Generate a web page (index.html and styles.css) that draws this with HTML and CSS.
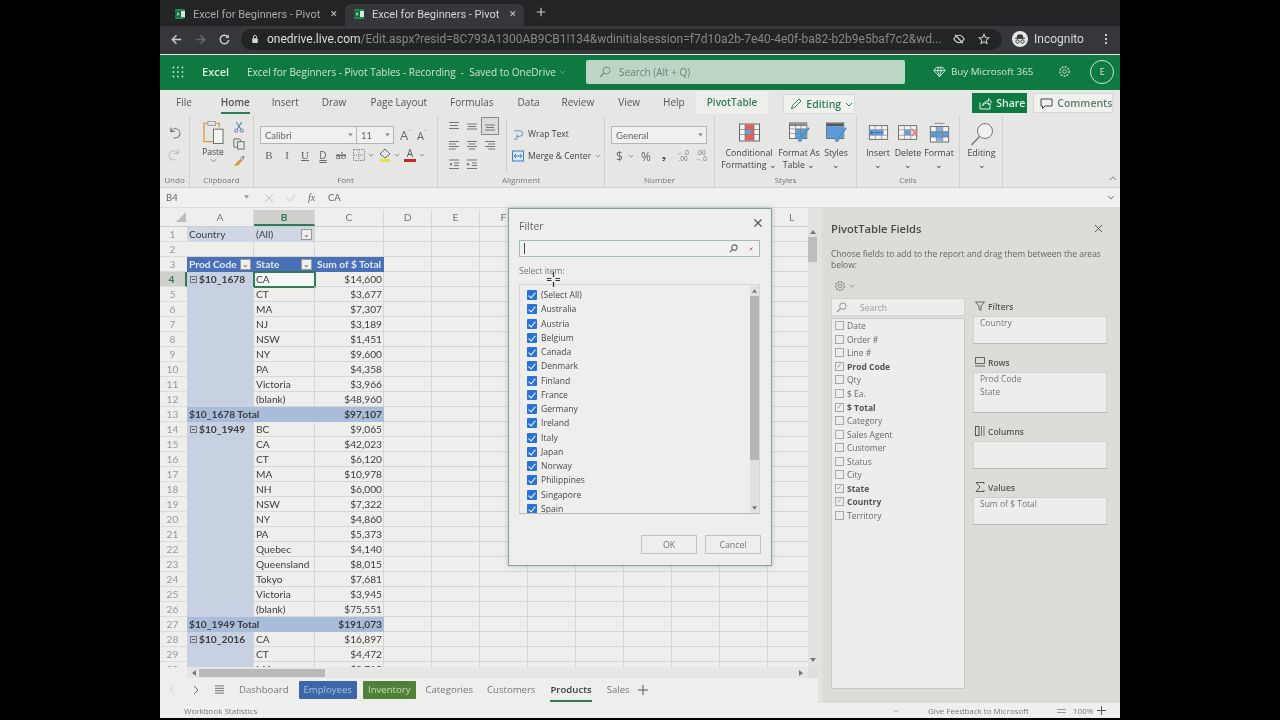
FILE: index.html
```html
<!doctype html>
<html lang="en">
  <head>
    <meta charset="UTF-8" />
    <title>Excel for Beginners - Pivot Tables - Recording</title>
    <link rel="stylesheet" href="styles.css">
  </head>
  <body>
    <div class="screen">
      <!-- Browser tabs -->
      <div class="tabstrip">
        <div class="tab">
          <svg class="favicon" viewBox="0 0 12 12"><rect x="1" y="1" width="10" height="10" rx="1" fill="#1d8a52"/><rect x="6" y="3" width="5" height="6" fill="#d5eadc"/><rect x="1" y="3" width="6" height="6" fill="#0d6b3a"/><path d="M3 4.500l2 3M5 4.500l-2 3" stroke="#fff" stroke-width=".7"/></svg>
          <span class="tab-title">Excel for Beginners - Pivot</span>
          <span class="tab-close">✕</span>
        </div>
        <div class="tab active">
          <svg class="favicon" viewBox="0 0 12 12"><rect x="1" y="1" width="10" height="10" rx="1" fill="#1d8a52"/><rect x="6" y="3" width="5" height="6" fill="#d5eadc"/><rect x="1" y="3" width="6" height="6" fill="#0d6b3a"/><path d="M3 4.500l2 3M5 4.500l-2 3" stroke="#fff" stroke-width=".7"/></svg>
          <span class="tab-title">Excel for Beginners - Pivot</span>
          <span class="tab-close">✕</span>
        </div>
        <svg class="new-tab" viewBox="0 0 12 12"><path d="M6 1v10M1 6h10" stroke="#c8c9cb" stroke-width="1.400"/></svg>
      </div>

      <!-- Address bar -->
      <div class="urlbar">
        <svg class="nav-icon" viewBox="0 0 14 14"><path d="M12 7H3M7 2.500 2.500 7 7 11.500" fill="none" stroke="#c9cacc" stroke-width="1.600"/></svg>
        <svg class="nav-icon" viewBox="0 0 14 14"><path d="M2 7h9M7 2.500 11.500 7 7 11.500" fill="none" stroke="#66686b" stroke-width="1.600"/></svg>
        <svg class="nav-icon" viewBox="0 0 14 14"><path d="M11.500 7.500A4.600 4.600 0 1 1 10 3.600" fill="none" stroke="#c9cacc" stroke-width="1.600"/><path d="M11.800 1.500v4h-4z" fill="#c9cacc"/></svg>
        <div class="omnibox">
          <svg class="lock" viewBox="0 0 10 12"><rect x="1.500" y="5" width="7" height="6" rx="1" fill="#d5d6d8"/><path d="M3 5V3.500a2 2 0 0 1 4 0V5" fill="none" stroke="#d5d6d8" stroke-width="1.200"/></svg>
          <span class="url"><b>onedrive.live.com</b>/Edit.aspx?resid=8C793A1300AB9CB1!134&amp;wdinitialsession=f7d10a2b-7e40-4e0f-ba82-b2b9e5baf7c2&amp;wd...</span>
          <svg class="omni-icon eye" viewBox="0 0 14 14"><path d="M1 7c2-3.400 4-4.400 6-4.400S11 3.600 13 7c-2 3.400-4 4.400-6 4.400S3 10.400 1 7z" fill="none" stroke="#c9cacc" stroke-width="1.400"/><path d="M2.500 2 11.500 12" stroke="#c9cacc" stroke-width="1.500"/></svg>
          <svg class="omni-icon" viewBox="0 0 14 14"><path d="M7 1.500 8.600 5.200l4 .4-3 2.700.9 3.900L7 10.200 3.500 12.200l.9-3.900-3-2.700 4-.4z" fill="none" stroke="#c9cacc" stroke-width="1.200"/></svg>
        </div>
        <div class="incognito">
          <svg class="spy" viewBox="0 0 16 16"><circle cx="8" cy="8" r="8" fill="#e6e6e6"/><path d="M3 7.300h10M5 7l.9-3h4.200l.9 3z" fill="#3a3b3e" stroke="#3a3b3e"/><circle cx="5.500" cy="10.500" r="1.700" fill="none" stroke="#3a3b3e"/><circle cx="10.500" cy="10.500" r="1.700" fill="none" stroke="#3a3b3e"/></svg>
          <span>Incognito</span>
        </div>
        <div class="kebab"><i></i><i></i><i></i></div>
      </div>

      <!-- Excel title bar -->
      <div class="appbar">
        <svg class="waffle" viewBox="0 0 12 12" fill="#cfe3d6"><circle cx="1.500" cy="1.500" r=".9"/><circle cx="6" cy="1.500" r=".9"/><circle cx="10.500" cy="1.500" r=".9"/><circle cx="1.500" cy="6" r=".9"/><circle cx="6" cy="6" r=".9"/><circle cx="10.500" cy="6" r=".9"/><circle cx="1.500" cy="10.500" r=".9"/><circle cx="6" cy="10.500" r=".9"/><circle cx="10.500" cy="10.500" r=".9"/></svg>
        <span class="app-name">Excel</span>
        <span class="doc-title">Excel for Beginners - Pivot Tables - Recording &nbsp;-&nbsp; Saved to OneDrive<svg viewBox="0 0 8 5"><path d="M1 1l3 3 3-3" fill="none" stroke="#7fb296"/></svg></span>
        <div class="search">
          <svg class="search-icon" viewBox="0 0 12 12"><circle cx="7.500" cy="4.500" r="3.500" fill="none" stroke="#6f8f7c"/><path d="M5 7 1 11" stroke="#6f8f7c" stroke-width="1.200"/></svg>
          <span>Search (Alt + Q)</span>
        </div>
        <div class="buy">
          <svg class="diamond" viewBox="0 0 14 12"><path d="M3.500 1h7L13 4.500 7 11 1 4.500zM1 4.500h12M5 4.500 7 11l2-6.500M5 4.500 6 1M9 4.500 8 1" fill="none" stroke="#d5e6db"/></svg>
          <span>Buy Microsoft 365</span>
        </div>
        <svg class="gear" viewBox="0 0 14 14"><circle cx="7" cy="7" r="2" fill="none" stroke="#bcd6c6"/><circle cx="7" cy="7" r="5" fill="none" stroke="#bcd6c6" stroke-width="1.600" stroke-dasharray="2 1.300"/></svg>
        <span class="avatar">E</span>
      </div>

      <!-- Ribbon tabs -->
      <div class="ribbon-tabs">
        <span class="rtab file">File</span>
        <span class="rtab home">Home</span>
        <span class="rtab insert">Insert</span>
        <span class="rtab draw">Draw</span>
        <span class="rtab layout">Page Layout</span>
        <span class="rtab formulas">Formulas</span>
        <span class="rtab data">Data</span>
        <span class="rtab review">Review</span>
        <span class="rtab view">View</span>
        <span class="rtab help">Help</span>
        <span class="rtab pivot">PivotTable</span>
        <span class="editing-btn">
          <svg viewBox="0 0 12 12"><path d="M1.500 10.500 2.500 7.500 9 1l2 2-6.500 6.500z" fill="none" stroke="#2f7d57"/></svg>
          Editing
          <svg class="chev-green" viewBox="0 0 8 5"><path d="M1 1l3 3 3-3" fill="none" stroke="#2f7d57"/></svg>
        </span>
        <span class="share-btn">
          <svg viewBox="0 0 13 13"><path d="M1 5.500V12h10V7M3.500 9c.5-3 2.500-5 6-5V1.500L12.500 5l-3 3V6C6.500 6 4.500 7 3.500 9z" fill="none" stroke="#e2efe7"/></svg>
          Share
        </span>
        <span class="comments-btn">
          <svg viewBox="0 0 13 13"><path d="M1 2h11v7H5l-2.500 2.500V9H1z" fill="none" stroke="#444"/></svg>
          Comments
        </span>
      </div>

      <!-- Ribbon -->
      <div class="ribbon">
        <div class="group g-undo">
          <div class="group-body undo-body">
            <svg viewBox="0 0 14 14"><path d="M3 1.500V6h4.500M3.500 5.500A5 5 0 1 1 6 12.500" fill="none" stroke="#6a6a6a" stroke-width="1.100"/></svg>
            <svg viewBox="0 0 14 14"><path d="M11 1.500V6H6.500M10.500 5.500A5 5 0 1 0 8 12.500" fill="none" stroke="#b9b9b9" stroke-width="1.100"/></svg>
          </div>
          <span class="group-label">Undo</span>
        </div>

        <div class="group g-clip">
          <div class="group-body clip-body">
            <div class="paste">
              <svg viewBox="0 0 22 25"><path d="M4 3H1v19h10" fill="none" stroke="#d79a3e" stroke-width="1.300"/><path d="M14 3h3v4" fill="none" stroke="#d79a3e" stroke-width="1.300"/><rect x="5" y="1" width="8" height="4" fill="none" stroke="#9a9a9a"/><rect x="11" y="9" width="10" height="15" fill="#f4f4f4" stroke="#6a6a6a"/></svg>
              <span>Paste</span>
              <svg class="chev" viewBox="0 0 8 5"><path d="M1 1l3 3 3-3" fill="none" stroke="#777"/></svg>
            </div>
            <div class="clip-tools">
              <svg viewBox="0 0 12 13"><path d="M3 1l5 8M9 1 4 9" stroke="#4f7fb5" stroke-width="1.100"/><circle cx="3" cy="10.500" r="1.700" fill="none" stroke="#4f7fb5"/><circle cx="9" cy="10.500" r="1.700" fill="none" stroke="#4f7fb5"/></svg>
              <svg viewBox="0 0 13 13"><path d="M4 10H1V1h6l1 1v2" fill="none" stroke="#666"/><rect x="5" y="4" width="7" height="8" fill="none" stroke="#666"/></svg>
              <svg viewBox="0 0 13 13"><path d="M8 4 3 9l-2 3 5-1 4-5z" fill="#d79a3e"/><path d="M8 4l3-3 1 1-2 4" fill="none" stroke="#666"/></svg>
            </div>
          </div>
          <span class="group-label">Clipboard</span>
        </div>

        <div class="group g-font">
          <div class="group-body font-body">
            <div class="font-row">
              <span class="select font-name">Calibri<svg class="caret" viewBox="0 0 6 4"><path d="M0 0h6L3 4z"/></svg></span>
              <span class="select font-size">11<svg class="caret" viewBox="0 0 6 4"><path d="M0 0h6L3 4z"/></svg></span>
              <span class="grow">A<sup>ˆ</sup></span>
              <span class="grow small">A<sup>ˇ</sup></span>
            </div>
            <div class="font-row tools">
              <b class="ft">B</b>
              <i class="ft">I</i>
              <u class="ft">U</u>
              <span class="ft dbl">D</span>
              <s class="ft">ab</s>
              <svg class="ft-ico" viewBox="0 0 12 12"><rect x=".5" y=".5" width="11" height="11" fill="none" stroke="#888" stroke-dasharray="1.500 1"/><path d="M6 1v10M1 6h10" stroke="#888" stroke-dasharray="1 1"/></svg>
              <svg class="chev tiny" viewBox="0 0 8 5"><path d="M1 1l3 3 3-3" fill="none" stroke="#777"/></svg>
              <svg class="ft-ico fill" viewBox="0 0 12 14"><path d="M6 1 11 6 6 10 1 6z" fill="none" stroke="#666"/><rect x="1" y="11" width="10" height="3" fill="#e7e24c"/></svg>
              <svg class="chev tiny" viewBox="0 0 8 5"><path d="M1 1l3 3 3-3" fill="none" stroke="#777"/></svg>
              <span class="ft-color"><span>A</span></span>
              <svg class="chev tiny" viewBox="0 0 8 5"><path d="M1 1l3 3 3-3" fill="none" stroke="#777"/></svg>
            </div>
          </div>
          <span class="group-label">Font</span>
        </div>

        <div class="group g-align">
          <div class="group-body align-body">
            <div class="align-grid">
              <svg viewBox="0 0 12 10"><path d="M1 1.500h10M2 4.500h8M1 7.500h10" stroke="#777"/></svg>
              <svg viewBox="0 0 12 10"><path d="M1 3h10M2 5.500h8M1 8h10" stroke="#777"/></svg>
              <svg class="on" viewBox="0 0 12 10"><path d="M1 4h10M2 6.500h8M1 9h10" stroke="#777"/></svg>
              <svg viewBox="0 0 12 10"><path d="M1 1.500h10M1 4h7M1 6.500h10M1 9h7" stroke="#777"/></svg>
              <svg viewBox="0 0 12 10"><path d="M1 1.500h10M2.500 4h7M1 6.500h10M2.500 9h7" stroke="#777"/></svg>
              <svg viewBox="0 0 12 10"><path d="M1 1.500h10M4 4h7M1 6.500h10M4 9h7" stroke="#777"/></svg>
              <svg viewBox="0 0 12 10"><path d="M1 1h10M6 4h5M6 6.500h5M1 9.500h10" stroke="#777"/><path d="M4 3.500 1 5.200 4 7z" fill="#4f8fd0"/></svg>
              <svg viewBox="0 0 12 10"><path d="M1 1h10M6 4h5M6 6.500h5M1 9.500h10" stroke="#777"/><path d="M1 3.500 4 5.200 1 7z" fill="#4f8fd0"/></svg>
            </div>
            <div class="align-text">
              <span class="cmd"><svg viewBox="0 0 12 13"><path d="M2 3h6a2.500 2.500 0 0 1 0 6H5" fill="none" stroke="#4f8fd0"/><path d="M6 7 4 9l2 2" fill="none" stroke="#4f8fd0"/><path d="M2 12h3" stroke="#666"/></svg>Wrap Text</span>
              <span class="cmd"><svg viewBox="0 0 12 11"><rect x=".5" y=".5" width="11" height="10" fill="#dbe8f5" stroke="#3f7fc0"/><path d="M2 5.500h8M4 3.500 2 5.500l2 2M8 3.500l2 2-2 2" fill="none" stroke="#3f7fc0"/></svg>Merge &amp; Center<svg class="chev tiny" viewBox="0 0 8 5"><path d="M1 1l3 3 3-3" fill="none" stroke="#777"/></svg></span>
            </div>
          </div>
          <span class="group-label">Alignment</span>
        </div>

        <div class="group g-num">
          <div class="group-body num-body">
            <span class="select num-format">General<svg class="caret" viewBox="0 0 6 4"><path d="M0 0h6L3 4z"/></svg></span>
            <div class="num-tools">
              <span class="dollar">$</span>
              <svg class="chev tiny" viewBox="0 0 8 5"><path d="M1 1l3 3 3-3" fill="none" stroke="#777"/></svg>
              <span class="pct">%</span>
              <span class="comma">❟</span>
              <span class="dec"><em>←</em>.0<br>.00</span>
              <span class="dec">.00<br><em>→</em>.0</span>
            </div>
          </div>
          <span class="group-label">Number</span>
        </div>

        <div class="group g-styles">
          <div class="group-body cmds">
            <div class="big cond">
              <svg viewBox="0 0 21 18"><rect x=".5" y=".5" width="20" height="17" fill="#f4f4f4" stroke="#666"/><rect x="6" y="1" width="9" height="5" fill="#e0615e"/><rect x="6" y="6" width="6" height="5" fill="#6d9bd1"/><rect x="12" y="6" width="3" height="5" fill="#e0615e"/><rect x="6" y="11" width="9" height="6" fill="#e0615e"/><path d="M6 1v16M15 1v16M1 6h19M1 11h19" stroke="#777" stroke-width=".7"/></svg>
              <span>Conditional<br>Formatting ⌄</span>
            </div>
            <div class="big table">
              <svg viewBox="0 0 23 22"><rect x=".5" y=".5" width="19" height="17" fill="#f4f4f4" stroke="#666"/><rect x="1" y="1" width="18" height="3" fill="#8a8a8a"/><rect x="7" y="7" width="12" height="10" fill="#5c9bd8"/><path d="M7 1v16M13 1v16M1 7h18M1 12h18" stroke="#777" stroke-width=".7"/><path d="M22 6 13 17" stroke="#4f8fd0" stroke-width="2"/><circle cx="12" cy="19" r="2.500" fill="#5c9bd8"/></svg>
              <span>Format As<br>Table ⌄</span>
            </div>
            <div class="big style">
              <svg viewBox="0 0 23 22"><rect x=".5" y=".5" width="19" height="17" fill="#f4f4f4" stroke="#666"/><rect x="1" y="1" width="18" height="3" fill="#555"/><rect x="1" y="4" width="18" height="13" fill="#5c9bd8"/><path d="M22 6 13 17" stroke="#4f8fd0" stroke-width="2"/><circle cx="12" cy="19" r="2.500" fill="#5c9bd8"/></svg>
              <span>Styles<br>⌄</span>
            </div>
          </div>
          <span class="group-label">Styles</span>
        </div>

        <div class="group g-cells">
          <div class="group-body cmds">
            <div class="big ins">
              <svg viewBox="0 0 23 18"><rect x="1.500" y="1.500" width="20" height="15" fill="#f4f4f4" stroke="#666"/><path d="M8 1v16M15 1v16M1 6h21M1 12h21" stroke="#777" stroke-width=".7"/><rect x="1" y="6" width="16" height="6" fill="#6d9bd1"/><path d="M16 9H2M5 6.500 2 9l3 2.500" fill="none" stroke="#2f6fb5"/></svg>
              <span>Insert<br>⌄</span>
            </div>
            <div class="big del">
              <svg viewBox="0 0 23 18"><rect x=".5" y="1.500" width="20" height="15" fill="#f4f4f4" stroke="#666"/><path d="M7 1v16M14 1v16M1 6h19M1 12h19" stroke="#777" stroke-width=".7"/><rect x="7" y="6" width="7" height="6" fill="#6d9bd1"/><path d="M15 5l6 8M21 5l-6 8" stroke="#e0716e" stroke-width="1.400"/></svg>
              <span>Delete<br>⌄</span>
            </div>
            <div class="big fmt">
              <svg viewBox="0 0 23 22"><path d="M6 1h11" stroke="#888"/><rect x="1.500" y="4.500" width="20" height="17" fill="#f4f4f4" stroke="#666"/><rect x="8" y="5" width="7" height="16" fill="#7fb0de"/><rect x="2" y="10" width="19" height="6" fill="#5c9bd8"/><path d="M8 4v17M15 4v17M1 10h21M1 16h21" stroke="#777" stroke-width=".7"/></svg>
              <span>Format<br>⌄</span>
            </div>
          </div>
          <span class="group-label">Cells</span>
        </div>

        <div class="group g-edit">
          <div class="group-body cmds">
            <div class="big find">
              <svg viewBox="0 0 24 26"><circle cx="15" cy="9" r="7.500" fill="#f1f1f1" stroke="#777"/><path d="M9.500 14.500 1.500 23" stroke="#777" stroke-width="1.400"/></svg>
              <span>Editing<br>⌄</span>
            </div>
          </div>
        </div>

        <svg class="collapse" viewBox="0 0 10 6"><path d="M1 5l4-4 4 4" fill="none" stroke="#777" stroke-width="1.200"/></svg>
      </div>

      <!-- Formula bar -->
      <div class="formula-bar">
        <span class="name-box">B4<svg class="caret" viewBox="0 0 6 4"><path d="M0 0h6L3 4z"/></svg></span>
        <div class="fx-tools">
          <svg viewBox="0 0 10 10"><path d="M1 1l8 8M9 1 1 9" stroke="#c4c4c4"/></svg>
          <svg viewBox="0 0 12 10"><path d="M1 5l3.500 4L11 1" fill="none" stroke="#c4c4c4"/></svg>
          <i>fx</i>
        </div>
        <span class="formula">CA</span>
        <svg class="formula-chev" viewBox="0 0 8 5"><path d="M1 1l3 3 3-3" fill="none" stroke="#777"/></svg>
      </div>

      <div class="workspace">
        <div class="sheet-col">
          <div class="grid-wrap">
            <div class="sheet">
              <div class="col-heads">
                <span class="corner"><svg viewBox="0 0 10 10"><path d="M10 0v10H0z" fill="#bdbdbd"/></svg></span>
                <span class="ch a">A</span>
                <span class="ch b on">B</span>
                <span class="ch c">C</span>
                <span class="ch w">D</span><span class="ch w">E</span><span class="ch w">F</span><span class="ch w">G</span><span class="ch w">H</span><span class="ch w">I</span><span class="ch w">J</span><span class="ch w">K</span><span class="ch w">L</span>
              </div>
              <div class="row"><span class="rh">1</span><span class="cell-a page">Country</span><span class="cell-b page">(All)<em class="drop">⌄</em></span><span class="cell-c"></span><span class="rest"></span></div>
              <div class="row"><span class="rh">2</span><span class="cell-a"></span><span class="cell-b"></span><span class="cell-c"></span><span class="rest"></span></div>
              <div class="row head"><span class="rh">3</span><span class="cell-a">Prod Code<em class="drop">⌄</em></span><span class="cell-b">State<em class="drop">⌄</em></span><span class="cell-c">Sum of $ Total</span><span class="rest"></span></div>
              <div class="row"><span class="rh on">4</span><span class="cell-a key"><em class="minus"></em>$10_1678</span><span class="cell-b sel">CA</span><span class="cell-c">$14,600</span><span class="rest"></span></div>
              <div class="row"><span class="rh">5</span><span class="cell-a key"></span><span class="cell-b">CT</span><span class="cell-c">$3,677</span><span class="rest"></span></div>
              <div class="row"><span class="rh">6</span><span class="cell-a key"></span><span class="cell-b">MA</span><span class="cell-c">$7,307</span><span class="rest"></span></div>
              <div class="row"><span class="rh">7</span><span class="cell-a key"></span><span class="cell-b">NJ</span><span class="cell-c">$3,189</span><span class="rest"></span></div>
              <div class="row"><span class="rh">8</span><span class="cell-a key"></span><span class="cell-b">NSW</span><span class="cell-c">$1,451</span><span class="rest"></span></div>
              <div class="row"><span class="rh">9</span><span class="cell-a key"></span><span class="cell-b">NY</span><span class="cell-c">$9,600</span><span class="rest"></span></div>
              <div class="row"><span class="rh">10</span><span class="cell-a key"></span><span class="cell-b">PA</span><span class="cell-c">$4,358</span><span class="rest"></span></div>
              <div class="row"><span class="rh">11</span><span class="cell-a key"></span><span class="cell-b">Victoria</span><span class="cell-c">$3,966</span><span class="rest"></span></div>
              <div class="row"><span class="rh">12</span><span class="cell-a key"></span><span class="cell-b">(blank)</span><span class="cell-c">$48,960</span><span class="rest"></span></div>
              <div class="row total"><span class="rh">13</span><span class="cell-a">$10_1678 Total</span><span class="cell-b"></span><span class="cell-c">$97,107</span><span class="rest"></span></div>
              <div class="row"><span class="rh">14</span><span class="cell-a key"><em class="minus"></em>$10_1949</span><span class="cell-b">BC</span><span class="cell-c">$9,065</span><span class="rest"></span></div>
              <div class="row"><span class="rh">15</span><span class="cell-a key"></span><span class="cell-b">CA</span><span class="cell-c">$42,023</span><span class="rest"></span></div>
              <div class="row"><span class="rh">16</span><span class="cell-a key"></span><span class="cell-b">CT</span><span class="cell-c">$6,120</span><span class="rest"></span></div>
              <div class="row"><span class="rh">17</span><span class="cell-a key"></span><span class="cell-b">MA</span><span class="cell-c">$10,978</span><span class="rest"></span></div>
              <div class="row"><span class="rh">18</span><span class="cell-a key"></span><span class="cell-b">NH</span><span class="cell-c">$6,000</span><span class="rest"></span></div>
              <div class="row"><span class="rh">19</span><span class="cell-a key"></span><span class="cell-b">NSW</span><span class="cell-c">$7,322</span><span class="rest"></span></div>
              <div class="row"><span class="rh">20</span><span class="cell-a key"></span><span class="cell-b">NY</span><span class="cell-c">$4,860</span><span class="rest"></span></div>
              <div class="row"><span class="rh">21</span><span class="cell-a key"></span><span class="cell-b">PA</span><span class="cell-c">$5,373</span><span class="rest"></span></div>
              <div class="row"><span class="rh">22</span><span class="cell-a key"></span><span class="cell-b">Quebec</span><span class="cell-c">$4,140</span><span class="rest"></span></div>
              <div class="row"><span class="rh">23</span><span class="cell-a key"></span><span class="cell-b">Queensland</span><span class="cell-c">$8,015</span><span class="rest"></span></div>
              <div class="row"><span class="rh">24</span><span class="cell-a key"></span><span class="cell-b">Tokyo</span><span class="cell-c">$7,681</span><span class="rest"></span></div>
              <div class="row"><span class="rh">25</span><span class="cell-a key"></span><span class="cell-b">Victoria</span><span class="cell-c">$3,945</span><span class="rest"></span></div>
              <div class="row"><span class="rh">26</span><span class="cell-a key"></span><span class="cell-b">(blank)</span><span class="cell-c">$75,551</span><span class="rest"></span></div>
              <div class="row total"><span class="rh">27</span><span class="cell-a">$10_1949 Total</span><span class="cell-b"></span><span class="cell-c">$191,073</span><span class="rest"></span></div>
              <div class="row"><span class="rh">28</span><span class="cell-a key"><em class="minus"></em>$10_2016</span><span class="cell-b">CA</span><span class="cell-c">$16,897</span><span class="rest"></span></div>
              <div class="row"><span class="rh">29</span><span class="cell-a key"></span><span class="cell-b">CT</span><span class="cell-c">$4,472</span><span class="rest"></span></div>
              <div class="row"><span class="rh">30</span><span class="cell-a key"></span><span class="cell-b">MA</span><span class="cell-c">$3,710</span><span class="rest"></span></div>
            </div>
            <div class="vscroll">
              <svg class="arrow" viewBox="0 0 6 4"><path d="M3 0l3 4H0z"/></svg>
              <span class="vthumb"></span>
              <svg class="arrow down" viewBox="0 0 6 4"><path d="M0 0h6L3 4z"/></svg>
            </div>
          </div>
          <div class="hscroll">
            <svg class="arrow" viewBox="0 0 4 6"><path d="M4 0v6L0 3z"/></svg>
            <span class="hthumb"></span>
            <svg class="arrow right" viewBox="0 0 4 6"><path d="M0 0v6l4-3z"/></svg>
          </div>
          <div class="sheet-tabs">
            <svg class="sheet-nav" viewBox="0 0 6 10"><path d="M5 1 1 5l4 4" fill="none" stroke="#d0d0d0"/></svg>
            <svg class="sheet-nav" viewBox="0 0 6 10"><path d="M1 1l4 4-4 4" fill="none" stroke="#666"/></svg>
            <svg class="sheet-menu" viewBox="0 0 10 9"><path d="M0 .5h10M0 3.200h10M0 5.800h10M0 8.500h10" stroke="#666"/></svg>
            <span class="stab">Dashboard</span>
            <span class="stab blue">Employees</span>
            <span class="stab green">Inventory</span>
            <span class="stab">Categories</span>
            <span class="stab">Customers</span>
            <span class="stab current">Products</span>
            <span class="stab">Sales</span>
            <svg class="add-sheet" viewBox="0 0 10 10"><path d="M5 0v10M0 5h10" stroke="#555"/></svg>
          </div>
        </div>

        <!-- Field list pane -->
        <aside class="pane">
          <div class="pane-head">
            <h2>PivotTable Fields</h2>
            <svg viewBox="0 0 10 10"><path d="M1 1l8 8M9 1 1 9" stroke="#555" stroke-width="1.100"/></svg>
          </div>
          <p class="pane-help">Choose fields to add to the report and drag them between the areas below:</p>
          <div class="pane-gear">
            <svg viewBox="0 0 12 12"><circle cx="6" cy="6" r="1.800" fill="none" stroke="#8a8a8a"/><circle cx="6" cy="6" r="4.300" fill="none" stroke="#8a8a8a" stroke-width="1.500" stroke-dasharray="1.800 1.100"/></svg>
            <svg class="chev tiny" viewBox="0 0 8 5"><path d="M1 1l3 3 3-3" fill="none" stroke="#888"/></svg>
          </div>
          <div class="pane-cols">
            <div class="fields">
              <div class="field-search">
                <svg viewBox="0 0 12 12"><circle cx="7.500" cy="4.500" r="3.500" fill="none" stroke="#8a8a8a"/><path d="M5 7 1 11" stroke="#8a8a8a" stroke-width="1.200"/></svg>
                <span>Search</span>
              </div>
              <ul class="field-list">
                <li><span class="box"></span>Date</li>
                <li><span class="box"></span>Order #</li>
                <li><span class="box"></span>Line #</li>
                <li class="used"><span class="box">✓</span>Prod Code</li>
                <li><span class="box"></span>Qty</li>
                <li><span class="box"></span>$ Ea.</li>
                <li class="used"><span class="box">✓</span>$ Total</li>
                <li><span class="box"></span>Category</li>
                <li><span class="box"></span>Sales Agent</li>
                <li><span class="box"></span>Customer</li>
                <li><span class="box"></span>Status</li>
                <li><span class="box"></span>City</li>
                <li class="used"><span class="box">✓</span>State</li>
                <li class="used"><span class="box">✓</span>Country</li>
                <li><span class="box"></span>Territory</li>
              </ul>
            </div>
            <div class="areas">
              <div class="area">
                <h3><svg viewBox="0 0 10 10"><path d="M.5 1h9L6 5v4.500L4 8V5z" fill="none" stroke="#666"/></svg>Filters</h3>
                <div class="drop-box filters"><span>Country</span></div>
              </div>
              <div class="area">
                <h3><svg viewBox="0 0 10 10"><rect x=".5" y=".5" width="9" height="6" fill="none" stroke="#666"/><path d="M0 9h10" stroke="#666"/></svg>Rows</h3>
                <div class="drop-box rows"><span>Prod Code</span><span>State</span></div>
              </div>
              <div class="area">
                <h3><svg viewBox="0 0 10 10"><rect x=".5" y=".5" width="3.500" height="9" fill="none" stroke="#555"/><path d="M6.500 0v10M9 0v10" stroke="#777"/></svg>Columns</h3>
                <div class="drop-box cols"></div>
              </div>
              <div class="area">
                <h3><svg viewBox="0 0 10 10"><path d="M9 2V.500H1L5 5 1 9.500h8V8" fill="none" stroke="#555"/></svg>Values</h3>
                <div class="drop-box vals"><span>Sum of $ Total</span></div>
              </div>
            </div>
          </div>
        </aside>
      </div>

      <div class="statusbar">
        <span class="stats">Workbook Statistics</span>
        <svg class="chev tiny status-chev" viewBox="0 0 8 5"><path d="M1 1l3 3 3-3" fill="none" stroke="#888"/></svg>
        <span class="feedback">Give Feedback to Microsoft</span>
        <svg class="zoom-ctl" viewBox="0 0 9 4"><path d="M0 .5h9M0 3.500h9" stroke="#999"/></svg>
        <span class="zoom-val">100%</span>
        <svg class="zoom-plus" viewBox="0 0 9 9"><path d="M4.500 0v9M0 4.500h9" stroke="#555"/></svg>
      </div>

      <!-- Filter dialog -->
      <div class="dialog">
        <div class="dialog-head">
          <span>Filter</span>
          <svg viewBox="0 0 8 8"><path d="M.5.500l7 7M7.500.500l-7 7" stroke="#555" stroke-width="1.200"/></svg>
        </div>
        <div class="filter-input">
          <span class="text-caret"></span>
          <svg class="fi-search" viewBox="0 0 10 10"><circle cx="6" cy="4" r="3" fill="none" stroke="#666" stroke-width="1.200"/><path d="M4 6 1 9" stroke="#666" stroke-width="1.400"/></svg>
          <svg class="fi-clear" viewBox="0 0 4 4"><path d="M.5.500l3 3M3.500.500l-3 3" stroke="#c08a96"/></svg>
        </div>
        <div class="select-label">Select item:</div>
        <div class="items">
          <ul>
            <li><span class="check"></span>(Select All)</li>
            <li><span class="check"></span>Australia</li>
            <li><span class="check"></span>Austria</li>
            <li><span class="check"></span>Belgium</li>
            <li><span class="check"></span>Canada</li>
            <li><span class="check"></span>Denmark</li>
            <li><span class="check"></span>Finland</li>
            <li><span class="check"></span>France</li>
            <li><span class="check"></span>Germany</li>
            <li><span class="check"></span>Ireland</li>
            <li><span class="check"></span>Italy</li>
            <li><span class="check"></span>Japan</li>
            <li><span class="check"></span>Norway</li>
            <li><span class="check"></span>Philippines</li>
            <li><span class="check"></span>Singapore</li>
            <li><span class="check"></span>Spain</li>
          </ul>
          <div class="items-scroll">
            <svg class="arrow" viewBox="0 0 6 4"><path d="M3 0l3 4H0z"/></svg>
            <span class="items-thumb"></span>
            <svg class="arrow down" viewBox="0 0 6 4"><path d="M0 0h6L3 4z"/></svg>
          </div>
        </div>
        <div class="dialog-actions">
          <button type="button">OK</button>
          <button type="button">Cancel</button>
        </div>
        <svg class="cursor" viewBox="0 0 15 15"><path d="M7.500 0v5M7.500 10v5M1 6.500h4.500M9.500 6.500H14M1 8.500h4.500M9.500 8.500H14" stroke="#333" stroke-width="1.200"/></svg>
      </div>
    </div>
  </body>
</html>
```

FILE: styles.css
```css
* {
  box-sizing: border-box;
}

html,
body {
  margin: 0;
  height: 100%;
  background: #000;
  overflow: hidden;
}

ul {
  margin: 0;
  padding: 0;
  list-style: none;
}

em {
  font-style: normal;
}

svg {
  display: block;
  flex: none;
}

.screen {
  position: relative;
  display: flex;
  flex-direction: column;
  width: 960px;
  height: 718px;
  margin-left: 160px;
  overflow: hidden;
  background: #e6e6e4;
  color: #444;
  font: 9.5px "Open Sans", sans-serif;
  filter: blur(.35px);
}

/* Browser chrome */
.tabstrip {
  display: flex;
  align-items: flex-end;
  flex: none;
  height: 26px;
  padding-left: 6px;
  background: #232426;
}

.tab {
  display: flex;
  align-items: center;
  flex: none;
  width: 179px;
  height: 22px;
  padding: 0 7px 2px 8px;
  color: #a9aaac;
  font: 11px Roboto, sans-serif;
}

.tab.active {
  border-radius: 6px 6px 0 0;
  background: #36373a;
  color: #d3d4d6;
}

.favicon {
  width: 12px;
  height: 12px;
  margin-right: 7px;
}

.tab-title {
  flex: 1;
  overflow: hidden;
  white-space: nowrap;
}

.tab-close {
  font-size: 9px;
  color: #cfd0d2;
}

.new-tab {
  width: 10px;
  height: 10px;
  margin: 0 0 9px 12px;
}

.urlbar {
  display: flex;
  align-items: center;
  flex: none;
  height: 28px;
  padding: 0 0 2px 10px;
  background: #36373a;
}

.nav-icon {
  width: 13px;
  height: 13px;
  margin-right: 11px;
}

.omnibox {
  display: flex;
  align-items: center;
  flex: none;
  width: 761px;
  height: 21px;
  margin-left: -1px;
  padding-left: 10px;
  border-radius: 11px;
  background: #232426;
}

.lock {
  width: 8px;
  height: 10px;
  margin-right: 8px;
}

.url {
  flex: 1;
  min-width: 0;
  overflow: hidden;
  color: #87888b;
  font: 12px Roboto, sans-serif;
  white-space: nowrap;
}

.url b {
  color: #dcdddf;
  font-weight: 400;
}

.omni-icon {
  width: 12px;
  height: 12px;
  margin-right: 12px;
}

.omni-icon.eye {
  margin-right: 13px;
}

.incognito {
  display: flex;
  align-items: center;
  gap: 6px;
  margin-left: 10px;
  color: #d8d9db;
  font: 12px Roboto, sans-serif;
}

.spy {
  width: 16px;
  height: 16px;
}

.kebab {
  display: flex;
  flex-direction: column;
  gap: 2px;
  margin-left: 21px;
}

.kebab i {
  width: 2px;
  height: 2px;
  background: #c9cacc;
}

.appbar {
  display: flex;
  align-items: center;
  flex: none;
  height: 35px;
  margin-top: 1px;
  padding: 0 0 2px 12px;
  background: #0e7a41;
  color: #cfe3d6;
}

.waffle {
  width: 12px;
  height: 12px;
  margin-right: 18px;
}

.app-name {
  width: 45px;
  font: 600 11px "Open Sans", sans-serif;
  color: #dcebe2;
}

.doc-title {
  display: flex;
  align-items: center;
  gap: 3px;
  width: 339px;
  font-size: 10px;
  white-space: pre;
}

.doc-title svg {
  width: 7px;
  height: 4px;
}

.search {
  display: flex;
  align-items: center;
  width: 319px;
  height: 24px;
  padding-left: 13px;
  border-radius: 2px;
  background: #bcd6c6;
  color: #668573;
  font-size: 10px;
}

.search-icon {
  width: 12px;
  height: 12px;
  margin-right: 8px;
}

.buy {
  display: flex;
  align-items: center;
  gap: 5px;
  margin-left: 28px;
  font-size: 9.8px;
}

.diamond {
  width: 13px;
  height: 12px;
}

.gear {
  width: 13px;
  height: 13px;
  margin-left: 25px;
}

.avatar {
  display: grid;
  place-items: center;
  width: 24px;
  height: 24px;
  margin-left: 19px;
  border: 1px solid #cfe3d6;
  border-radius: 50%;
  font-size: 9px;
}

/* Ribbon tabs */
.ribbon-tabs {
  display: flex;
  align-items: flex-start;
  flex: none;
  height: 26px;
  padding-top: 1px;
  font-size: 10px;
  color: #555;
}

.rtab {
  display: block;
  flex: none;
  height: 23px;
  padding-top: 4px;
  line-height: 14px;
  white-space: nowrap;
}

.file { margin-left: 16px; }
.home { margin-left: 29px; border-bottom: 2px solid #2f7d57; font-weight: 600; }
.insert { margin-left: 22px; }
.draw { margin-left: 23px; }
.layout { margin-left: 24px; }
.formulas { margin-left: 23px; }
.data { margin-left: 24px; }
.review { margin-left: 22px; }
.view { margin-left: 24px; }
.help { margin-left: 23px; }

.pivot {
  margin-left: 11px;
  padding: 4px 11px 0;
  background: #eeeeec;
  color: #2f7d57;
  font-weight: 600;
}

.editing-btn,
.comments-btn,
.share-btn {
  display: flex;
  align-items: center;
  flex: none;
  gap: 4px;
  height: 20px;
  border: 1px solid #d8d8d6;
  background: #f0f0ee;
  font-weight: 600;
  font-size: 10.500px;
}

.editing-btn {
  width: 72px;
  margin: 3px 0 0 15px;
  padding-left: 6px;
  color: #2f7d57;
}

.editing-btn svg {
  width: 12px;
  height: 12px;
}

.editing-btn .chev-green {
  width: 8px;
  height: 5px;
}

.share-btn {
  width: 55px;
  margin: 2px 0 0 117px;
  padding-left: 6px;
  border-color: #0e7a41;
  background: #0e7a41;
  color: #e2efe7;
}

.share-btn svg,
.comments-btn svg {
  width: 13px;
  height: 13px;
}

.comments-btn {
  width: 80px;
  margin: 2px 0 0 6px;
  padding-left: 6px;
  color: #5b7f6c;
}

/* Ribbon */
.ribbon {
  position: relative;
  display: flex;
  flex: none;
  height: 72px;
  border-bottom: 1px solid #d3d3d1;
}

.group {
  display: flex;
  flex-direction: column;
  flex: none;
  height: 71px;
  border-right: 1px solid #d1d1cf;
}

.g-undo { width: 30px; }
.g-clip { width: 64px; }
.g-font { width: 184px; }
.g-align { width: 167px; }
.g-num { width: 110px; }
.g-styles { width: 142px; }
.g-cells { width: 103px; }
.g-edit { width: 43px; }

.group-body {
  display: flex;
  flex: 1;
  min-height: 0;
}

.group-label {
  height: 14px;
  color: #777;
  font-size: 8px;
  line-height: 14px;
  text-align: center;
}

.undo-body {
  flex-direction: column;
  align-items: center;
  gap: 9px;
  padding-top: 10px;
}

.undo-body svg {
  width: 13px;
  height: 13px;
}

.clip-body {
  padding: 4px 0 0 12px;
}

.paste {
  display: flex;
  flex-direction: column;
  align-items: center;
  width: 22px;
  gap: 1px;
  font-size: 8.500px;
}

.paste > svg:first-child {
  width: 21px;
  height: 25px;
}

.chev {
  width: 7px;
  height: 5px;
}

.chev.tiny {
  width: 6px;
  height: 4px;
}

.clip-tools {
  display: flex;
  flex-direction: column;
  align-items: center;
  gap: 5px;
  margin: 1px 0 0 9px;
}

.clip-tools svg {
  width: 12px;
  height: 12px;
}

.font-body {
  flex-direction: column;
  padding: 10px 0 0 6px;
}

.font-row {
  display: flex;
  align-items: center;
  height: 18px;
}

.select {
  position: relative;
  display: flex;
  align-items: center;
  flex: none;
  height: 18px;
  padding-left: 4px;
  border: 1px solid #b5b5b3;
  background: #f0f0ee;
  color: #666;
  font: 9.500px Lato, sans-serif;
}

.caret {
  position: absolute;
  top: 6px;
  right: 3px;
  width: 5px;
  height: 4px;
  fill: #999;
}

.font-name { width: 97px; }
.font-size { width: 38px; margin-left: -1px; }

.grow {
  margin-left: 6px;
  color: #666;
  font-size: 13px;
  line-height: 1;
}

.grow.small {
  font-size: 11px;
}

.grow sup {
  color: #c98a2e;
  font-size: 7px;
  line-height: 0;
}

.tools {
  height: 22px;
}

.ft {
  flex: none;
  width: 18px;
  color: #666;
  font: 11px "Liberation Serif", serif;
  text-align: center;
}

.ft.dbl {
  font-family: "Open Sans", sans-serif;
  font-size: 10px;
  text-decoration: underline double;
}

.ft-ico {
  width: 12px;
  height: 12px;
  margin-left: 3px;
}

.ft-ico.fill {
  height: 14px;
  margin-left: 5px;
}

.tools .chev.tiny {
  margin-left: 3px;
}

.ft-color {
  width: 12px;
  margin-left: 4px;
  border-bottom: 3px solid #c02a2a;
  color: #555;
  font-size: 10px;
  line-height: 11px;
  text-align: center;
}

.align-body {
  padding: 0 0 0 7px;
}

.align-grid {
  display: grid;
  grid-template-columns: repeat(3, 18px);
  grid-auto-rows: 19px;
  width: 54px;
  justify-items: center;
  align-items: center;
}

.align-grid svg {
  width: 12px;
  height: 10px;
}

.align-grid .on {
  box-sizing: content-box;
  padding: 3px 2px;
  border: 1px solid #8a8a8a;
  background: #dcdcda;
}

.align-text {
  display: flex;
  flex-direction: column;
  gap: 8px;
  height: 54px;
  margin: 2px 0 0 7px;
  padding: 9px 0 0 5px;
  border-left: 1px solid #cfcfcd;
}

.cmd {
  display: flex;
  align-items: center;
  gap: 4px;
  height: 14px;
  font-size: 8.600px;
  white-space: nowrap;
}

.cmd svg {
  width: 12px;
  height: 12px;
}

.cmd .chev.tiny {
  width: 6px;
  height: 4px;
}

.num-body {
  flex-direction: column;
  padding: 10px 0 0 6px;
}

.num-format {
  width: 96px;
}

.num-tools {
  display: flex;
  align-items: center;
  margin-top: 1px;
  padding-left: 5px;
  height: 22px;
}

.dollar,
.pct {
  flex: none;
  font-size: 12px;
  color: #666;
}

.dollar {
  width: 7px;
}

.num-tools .chev.tiny {
  margin-left: 5px;
}

.pct {
  width: 11px;
  margin-left: 7px;
}

.comma {
  flex: none;
  width: 6px;
  margin-left: 10px;
  color: #444;
  font-size: 10px;
  font-family: "DejaVu Sans", sans-serif;
}

.dec {
  flex: none;
  width: 18px;
  color: #777;
  font: 6.500px/6.500px "Liberation Sans", sans-serif;
  text-align: center;
}

.comma + .dec {
  margin-left: 6px;
}

.dec em {
  color: #4f8fd0;
}

.cmds {
  padding-top: 6px;
}

.g-styles .cmds {
  padding-left: 8px;
}

.g-cells .cmds {
  padding-left: 6px;
}

.big {
  display: flex;
  flex-direction: column;
  align-items: center;
  flex: none;
  font-size: 8.800px;
  line-height: 12px;
  text-align: center;
  white-space: nowrap;
}

.big svg {
  width: 21px;
  height: 21px;
  margin-bottom: 4px;
}

.big.cond { width: 52px; }
.big.table { width: 48px; }
.big.style { width: 26px; }
.big.ins { width: 30px; }
.big.del { width: 30px; }
.big.fmt { width: 32px; }
.big.find { width: 43px; }

.big.find svg {
  width: 24px;
  height: 26px;
  margin-bottom: -1px;
}

.collapse {
  position: absolute;
  right: 3px;
  bottom: 6px;
  width: 8px;
  height: 5px;
}

/* Formula bar */
.formula-bar {
  display: flex;
  align-items: center;
  flex: none;
  height: 20px;
  background: #f0f0ee;
  border-bottom: 1px solid #dcdcda;
  font: 9.500px Lato, sans-serif;
  color: #666;
}

.name-box {
  position: relative;
  width: 95px;
  padding-left: 6px;
}

.name-box .caret {
  top: 3px;
  right: 6px;
}

.fx-tools {
  display: flex;
  align-items: center;
  gap: 12px;
  width: 73px;
  padding-left: 9px;
}

.fx-tools svg {
  width: 10px;
  height: 10px;
}

.fx-tools i {
  font: italic 10px "Liberation Serif", serif;
  color: #666;
}

.formula {
  flex: 1;
}

.formula-chev {
  width: 8px;
  height: 5px;
  margin-right: 5px;
}

/* Worksheet */
.workspace {
  display: flex;
  flex: 1;
  min-height: 0;
}

.sheet-col {
  display: flex;
  flex-direction: column;
  flex: none;
  width: 658px;
  background: #eeeeec;
}

.grid-wrap {
  display: flex;
  flex: 1;
  min-height: 0;
}

.sheet {
  flex: 1;
  min-width: 0;
  overflow: hidden;
  font: 10.200px Lato, sans-serif;
  color: #3d3d3d;
}

.col-heads {
  display: flex;
  height: 19px;
  padding-top: 2px;
  border-bottom: 1px solid #cdcdcb;
  color: #777;
}

.corner {
  flex: none;
  width: 27px;
  padding: 2px 1px 0 16px;
}

.ch {
  flex: none;
  border-right: 1px solid #d8d8d6;
  text-align: center;
  line-height: 14px;
}

.ch.a { width: 67px; }
.ch.b { width: 61px; }
.ch.c { width: 69px; }
.ch.w { width: 48px; }

.ch.on {
  border-bottom: 2px solid #2f7d57;
  background: #cfcfcd;
  color: #2f7d57;
  font-weight: 700;
}

.row {
  display: flex;
  height: 15px;
  line-height: 14px;
  white-space: nowrap;
}

.rh {
  flex: none;
  width: 27px;
  padding-right: 2px;
  border-bottom: 1px solid #dcdcda;
  color: #999;
  text-align: center;
}

.rh.on {
  border-right: 2px solid #2f7d57;
  background: #cfcfcd;
  color: #2f7d57;
  font-weight: 700;
}

.cell-a,
.cell-b,
.cell-c {
  position: relative;
  flex: none;
  padding: 0 1px 0 2px;
  border-right: 1px solid #d6d6d4;
  border-bottom: 1px solid #d6d6d4;
}

.cell-a { width: 67px; }
.cell-b { width: 61px; }
.cell-c { width: 69px; text-align: right; }

.page {
  background: #d0d7e4;
  border-bottom-color: #d0d7e4;
}

.key {
  background: #c7d1e2;
  border-bottom-color: #c7d1e2;
  font-weight: 700;
}

.minus {
  position: relative;
  display: inline-block;
  width: 7px;
  height: 7px;
  margin: 0 2px 0 1px;
  border: 1px solid #777;
}

.minus::after {
  position: absolute;
  top: 2px;
  left: 1px;
  width: 3px;
  height: 1px;
  background: #555;
  content: '';
}

.head .cell-a,
.head .cell-b,
.head .cell-c {
  padding-left: 2px;
  background: #4a70b8;
  border-color: #4a70b8;
  color: #e4e9f2;
  font-weight: 700;
  text-align: left;
}

.total .cell-a,
.total .cell-b,
.total .cell-c {
  background: #a9bcd9;
  border-color: #a9bcd9;
  font-weight: 700;
}

.total .cell-a {
  z-index: 1;
}

.drop {
  position: absolute;
  top: 2px;
  right: 2px;
  width: 11px;
  height: 11px;
  border: 1px solid #999;
  background: #eeeeec;
  color: #555;
  font: 8px/7px "Open Sans", sans-serif;
  text-align: center;
}

.sel {
  background: #f6f6f4;
  outline: 2px solid #2f7d57;
  outline-offset: -1px;
}

.rest {
  flex: 1;
  border-bottom: 1px solid #d6d6d4;
  background-image: linear-gradient(to right, transparent 47px, #d6d6d4 47px);
  background-size: 48px 100%;
}

.vscroll {
  position: relative;
  flex: none;
  width: 10px;
  background: #e2e2e0;
}

.arrow {
  position: absolute;
  top: 22px;
  left: 2px;
  width: 6px;
  height: 4px;
  fill: #777;
}

.arrow.down {
  top: auto;
  bottom: 5px;
}

.vthumb {
  display: block;
  width: 9px;
  height: 25px;
  margin-top: 29px;
  background: #bdbdbb;
}

.hscroll {
  position: relative;
  flex: none;
  height: 11px;
  margin-left: 27px;
  border-right: 10px solid #dededc;
  background: #e6e6e4;
}

.hscroll .arrow {
  top: 3px;
  left: 5px;
  width: 4px;
  height: 6px;
}

.hscroll .arrow.right {
  left: auto;
  right: 5px;
}

.hthumb {
  display: block;
  width: 126px;
  height: 8px;
  margin: 2px 0 0 12px;
  background: #b9b9b7;
}

.sheet-tabs {
  display: flex;
  align-items: center;
  flex: none;
  height: 25px;
  padding: 0 0 2px 9px;
  font-size: 9.600px;
  color: #777;
}

.sheet-nav {
  width: 6px;
  height: 10px;
  margin-right: 18px;
}

.sheet-menu {
  width: 9px;
  height: 9px;
  margin: 0 15px 0 -2px;
}

.stab {
  flex: none;
  height: 18px;
  margin-right: 14px;
  line-height: 18px;
  white-space: nowrap;
}

.stab:nth-of-type(1) {
  margin-right: 10px;
}

.stab.blue {
  margin-right: 6px;
  padding: 0 5px;
  border-radius: 1px;
  background: #3c66a8;
  color: #a9c0e2;
}

.stab.green {
  margin-right: 10px;
  padding: 0 5px;
  border-radius: 1px;
  background: #4f8238;
  color: #c3dcb2;
}

.stab.current {
  position: relative;
  margin: 0 15px 0 1px;
  color: #3c3c3c;
  font-weight: 600;
}

.stab.current::after {
  position: absolute;
  left: 0;
  right: 0;
  bottom: -3px;
  height: 2px;
  background: #2f7d57;
  content: '';
}

.add-sheet {
  width: 10px;
  height: 10px;
  margin-left: -6px;
}

/* Field list */
.pane {
  display: flex;
  flex-direction: column;
  flex: none;
  width: 302px;
  padding: 13px 12px 14px 9px;
  border-left: 4px solid #e2e2e0;
  background: #dcdcd8;
}

.pane-head {
  display: flex;
  align-items: center;
  justify-content: space-between;
  margin-right: 5px;
}

.pane-head h2 {
  margin: 0;
  color: #4a4a4a;
  font: 600 11.200px "Open Sans", sans-serif;
}

.pane-head svg {
  width: 9px;
  height: 9px;
}

.pane-help {
  margin: 12px 0 0;
  font-size: 8.500px;
  line-height: 11px;
  color: #666;
}

.pane-gear {
  display: flex;
  align-items: center;
  gap: 3px;
  margin: 10px 0 0 3px;
}

.pane-gear > svg:first-child {
  width: 12px;
  height: 12px;
}

.pane-cols {
  display: flex;
  flex: 1;
  gap: 8px;
  min-height: 0;
  margin-top: 6px;
}

.fields {
  display: flex;
  flex-direction: column;
  flex: none;
  width: 134px;
}

.field-search {
  display: flex;
  align-items: center;
  gap: 13px;
  flex: none;
  height: 18px;
  padding-left: 4px;
  border: 1px solid #d1d1cf;
  background: #ededeb;
  color: #9a9a9a;
  font-size: 8.500px;
}

.field-search svg {
  width: 11px;
  height: 11px;
}

.field-list {
  flex: 1;
  margin-top: 2px;
  padding: 0 2px;
  border: 1px solid #c9c9c7;
  background: #ededeb;
  font-size: 8.500px;
}

.field-list li {
  display: flex;
  align-items: center;
  gap: 3px;
  height: 13.550px;
  padding-left: 1px;
  color: #6a6a6a;
  white-space: nowrap;
}

.field-list .used {
  color: #555;
  font-weight: 700;
}

.box {
  flex: none;
  width: 9px;
  height: 9px;
  border: 1px solid #a8a8a6;
  color: #999;
  font: 400 7px/7px "DejaVu Sans", sans-serif;
  text-align: center;
}

.areas {
  display: flex;
  flex-direction: column;
  flex: none;
  width: 134px;
}

.area h3 {
  display: flex;
  align-items: center;
  gap: 3px;
  height: 16px;
  margin: 0 0 2px;
  padding-left: 2px;
  color: #555;
  font: 600 8.500px "Open Sans", sans-serif;
}

.area h3 svg {
  width: 10px;
  height: 10px;
}

.drop-box {
  display: flex;
  flex-direction: column;
  gap: 1px;
  padding: 0 6px;
  border: 1px solid #d1d1cf;
  border-bottom-color: #b9b9b7;
  background: #ededeb;
  color: #777;
  font-size: 8.500px;
  line-height: 12px;
}

.drop-box.filters { height: 28px; margin-bottom: 10px; }
.drop-box.rows { height: 41px; margin-bottom: 10px; }
.drop-box.cols { height: 28px; margin-bottom: 10px; }
.drop-box.vals { height: 28px; }

/* Status bar */
.statusbar {
  display: flex;
  align-items: center;
  flex: none;
  height: 15px;
  background: #efefed;
  color: #777;
  font-size: 8px;
}

.stats {
  width: 733px;
  padding-left: 24px;
}

.status-chev {
  margin-right: 29px;
}

.feedback {
  width: 129px;
}

.zoom-ctl {
  width: 9px;
  height: 4px;
}

.zoom-val {
  margin: 0 4px 0 7px;
}

.zoom-plus {
  width: 9px;
  height: 9px;
}

/* Filter dialog */
.dialog {
  position: absolute;
  top: 208px;
  left: 348px;
  width: 264px;
  height: 358px;
  padding: 10px 10px;
  border: 1px solid #7fa892;
  background: #eeeeec;
  box-shadow: 0 0 4px rgba(110, 150, 130, .5);
}

.dialog-head {
  display: flex;
  justify-content: space-between;
  height: 21px;
  color: #666;
  font-size: 10.500px;
  line-height: 14px;
}

.dialog-head svg {
  width: 8px;
  height: 8px;
  margin-right: -1px;
}

.filter-input {
  position: relative;
  display: flex;
  align-items: center;
  width: 241px;
  height: 17px;
  border: 1px solid #a5bcae;
  background: #f1f1ef;
}

.text-caret {
  width: 1px;
  height: 11px;
  margin-left: 4px;
  background: #444;
}

.fi-search {
  width: 9px;
  height: 9px;
  margin-left: 204px;
}

.fi-clear {
  width: 4px;
  height: 4px;
  margin-left: 11px;
}

.select-label {
  height: 27px;
  padding-top: 8px;
  color: #777;
  font-size: 8.500px;
}

.items {
  position: relative;
  display: flex;
  width: 241px;
  height: 230px;
  overflow: hidden;
  padding-left: 7px;
  border: 1px solid #d4d4d2;
  border-bottom-color: #b9b9b7;
  color: #484848;
  font-size: 8.600px;
}

.items ul {
  flex: 1;
  padding-top: 3px;
}

.items li {
  display: flex;
  align-items: center;
  gap: 4px;
  height: 14.260px;
  white-space: nowrap;
}

.check {
  position: relative;
  flex: none;
  width: 10px;
  height: 10px;
  border-radius: 1px;
  background: #2a72d8;
}

.check::after {
  position: absolute;
  top: 1px;
  left: 3px;
  width: 3px;
  height: 6px;
  border: solid #fff;
  border-width: 0 1.500px 1.500px 0;
  transform: rotate(40deg);
  content: '';
}

.items-scroll {
  position: relative;
  flex: none;
  width: 9px;
  margin-top: 1px;
  background: #e0e0de;
}

.items-scroll .arrow {
  top: 3px;
  left: 2px;
  width: 5px;
}

.items-scroll .arrow.down {
  top: auto;
  bottom: 3px;
}

.items-thumb {
  display: block;
  height: 164px;
  margin-top: 10px;
  background: #b5b5b3;
}

.dialog-actions {
  display: flex;
  justify-content: flex-end;
  gap: 8px;
  margin-top: 21px;
}

.dialog-actions button {
  width: 56px;
  height: 19px;
  padding: 0;
  border: 1px solid #c4c4c2;
  background: #eeeeec;
  color: #777;
  font: 8.800px "Open Sans", sans-serif;
}

.cursor {
  position: absolute;
  top: 63px;
  left: 37px;
  width: 15px;
  height: 15px;
}
```
